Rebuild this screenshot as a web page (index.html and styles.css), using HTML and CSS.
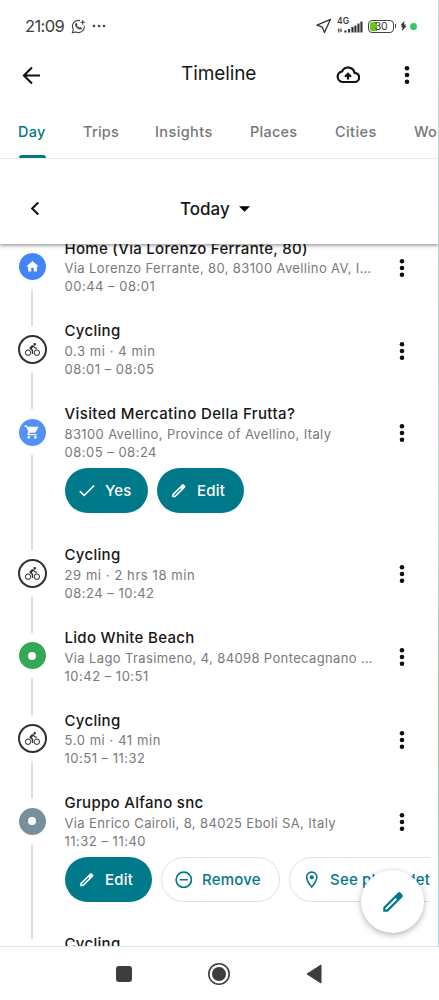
FILE: index.html
```
<!DOCTYPE html>
<html lang="en">
<head>
<meta charset="utf-8">
<title>Timeline</title>
<link rel="stylesheet" href="styles.css">
</head>
<body>
<svg class="defs" aria-hidden="true">
  <symbol id="dots" viewBox="0 0 6 20"><circle cx="3" cy="3.2" r="2.3"/><circle cx="3" cy="10" r="2.3"/><circle cx="3" cy="16.8" r="2.3"/></symbol>
  <symbol id="bike" viewBox="0 0 24 24"><path d="M15.5 5.5c1.1 0 2-.9 2-2s-.9-2-2-2-2 .9-2 2 .9 2 2 2zM5 12c-2.8 0-5 2.200-5 5s2.200 5 5 5 5-2.200 5-5-2.200-5-5-5zm0 8.500c-1.900 0-3.500-1.600-3.500-3.500s1.600-3.500 3.500-3.500 3.500 1.600 3.500 3.500-1.600 3.500-3.500 3.500zm5.800-10l2.400-2.400.8.800c1.300 1.300 3 2.100 5.100 2.100V9c-1.500 0-2.700-.6-3.600-1.500l-1.900-1.900c-.5-.4-1-.6-1.600-.6s-1.100.2-1.400.6L7.800 8.400c-.4.400-.6.900-.6 1.400 0 .6.200 1.100.6 1.400L11 14v5h2v-6.200l-2.200-2.300zM19 12c-2.800 0-5 2.200-5 5s2.200 5 5 5 5-2.200 5-5-2.200-5-5-5zm0 8.500c-1.900 0-3.500-1.600-3.500-3.500s1.600-3.500 3.500-3.500 3.500 1.600 3.500 3.500-1.600 3.500-3.500 3.500z"/></symbol>
  <symbol id="home" viewBox="0 0 24 24"><path d="M10 20v-6h4v6h5v-8h3L12 3 2 12h3v8z"/></symbol>
  <symbol id="cart" viewBox="0 0 24 24"><path d="M7 18c-1.100 0-1.990.9-1.990 2S5.900 22 7 22s2-.9 2-2-.9-2-2-2zM1 2v2h2l3.600 7.590-1.350 2.450C4.520 15.370 5.480 17 7 17h12v-2H7.420l1.100-2h7.450c.75 0 1.410-.41 1.750-1.030L22 4H5.210l-.94-2H1zm16 16c-1.100 0-1.990.9-1.990 2s.89 2 1.990 2 2-.9 2-2-.9-2-2-2z"/></symbol>
  <symbol id="pencil" viewBox="0 0 24 24"><path fill-rule="evenodd" d="M20.400 4.800 19.200 3.600a2.100 2.100 0 0 0-3 0L3 16.800V21h4.200L20.400 7.800a2.100 2.100 0 0 0 0-3zM6.200 19H5v-1.200L14.400 8.400l1.200 1.200z"/></symbol>
  <symbol id="check" viewBox="0 0 24 24"><path d="M2.500 12.500l6 6L22 5" fill="none" stroke="currentColor" stroke-width="2.200"/></symbol>
  <symbol id="minus" viewBox="0 0 24 24"><g fill="none" stroke="currentColor" stroke-width="2.200"><circle cx="12" cy="12" r="10.500"/><path d="M6.500 12h11"/></g></symbol>
  <symbol id="pin" viewBox="0 0 24 24"><path d="M12 1.500c-4 0-7 3-7 7 0 5 7 13.500 7 13.500s7-8.500 7-13.500c0-4-3-7-7-7z" fill="none" stroke="currentColor" stroke-width="2.200"/><circle cx="12" cy="8.500" r="2.800"/></symbol>
</svg>

<div class="screen">
  <header class="header">
    <div class="status">
      <span class="clock">21:09</span>
      <svg class="chat" viewBox="0 0 16 16"><g fill="none" stroke="#444" stroke-width="1.200"><path d="M9.600 1.700A6.300 6.300 0 0 0 2.500 11L1.500 14.700 5.200 13.800A6.300 6.300 0 0 0 14.200 7.300M12.500 1v5M10 3.500h5"/></g><path d="M5 4.500c.7-.6 1.200-.4 1.500.3l.5 1.200-.7 1c.6 1.200 1.400 1.900 2.600 2.400l.9-1 1.700.8c.5.900-.7 2-1.700 2C7 11 4.200 8 4.300 6z" fill="#444"/></svg>
      <svg class="more" viewBox="0 0 14 4" fill="#444"><circle cx="2" cy="2" r="1.300"/><circle cx="7" cy="2" r="1.300"/><circle cx="12" cy="2" r="1.300"/></svg>
      <svg class="nav-arrow" viewBox="0 0 16 16"><path d="M14.500 1.300 1 7.200l5.300 2 2.200 5.400z" fill="none" stroke="#333" stroke-width="1.300" stroke-linejoin="round"/></svg>
      <span class="signal"><span class="net">4G</span>
        <svg class="bars" viewBox="0 0 26 12" fill="#333"><path d="M2 7.500 0 9.300h1.300v2.200H2.400V7.500zM3.400 7.500v4L5.600 9.700H4.500V7.500zM7.300 9.500h2.300v2H7.300zM11 8h2.200v3.500H11zM14.400 6h2.200v5.500h-2.200zM17.400 4.500h2.100v7h-2.100zM20.400 2.500h2.100v9h-2.100zM23.400.5h2.100v11h-2.100z"/></svg>
      </span>
      <span class="battery"><span class="charge">30</span></span>
      <svg class="bolt" viewBox="0 0 8 12"><path d="M5 0 .5 5.500H3L.8 7.300H3L2 12l5.500-6H5l2.300-1.800H4.600z" fill="#333"/></svg>
      <span class="live"></span>
    </div>
    <div class="appbar">
      <svg class="back" viewBox="0 0 20 20"><path d="M19 10H2.500M10.500 1.500 2 10l8.500 8.500" fill="none" stroke="#111" stroke-width="2.200"/></svg>
      <h1 class="heading">Timeline</h1>
      <svg class="cloud" viewBox="0 0 24 18"><path d="M18.500 6.800A6.500 6.500 0 0 0 6.200 5.300 5.400 5.400 0 0 0 6.500 16h12a4.600 4.600 0 0 0 0-9.200z" fill="none" stroke="#111" stroke-width="2.200"/><path d="M12 13.500V8.500M9 10.800 12 7.800l3 3" fill="none" stroke="#111" stroke-width="2.200"/></svg>
      <svg class="dots"><use href="#dots"/></svg>
    </div>
    <nav class="tabs"><a class="tab tab-on w-day">Day</a><a class="tab w-trips">Trips</a><a class="tab w-insights">Insights</a><a class="tab w-places">Places</a><a class="tab w-cities">Cities</a><a class="tab">World</a></nav>
    <div class="datebar">
      <svg class="prev" viewBox="0 0 10 16"><path d="M8.500 1.500 2 8l6.500 6.500" fill="none" stroke="#111" stroke-width="2.200"/></svg>
      <span class="today">Today</span>
      <svg class="caret" viewBox="0 0 12 6"><path d="M0 0h12L6 6z"/></svg>
    </div>
  </header>

  <main class="list">
    <section class="item">
      <div class="rail"><span class="node blue"><svg class="glyph"><use href="#home"/></svg></span><i class="line"></i></div>
      <div class="body"><h2 class="title t-home">Home (Via Lorenzo Ferrante, 80)</h2><p class="sub">Via Lorenzo Ferrante, 80, 83100 Avellino AV, I…</p><p class="time">00:44 – 08:01</p></div>
      <svg class="dots"><use href="#dots"/></svg>
    </section>
    <section class="item">
      <div class="rail"><span class="node ring"><svg class="glyph"><use href="#bike"/></svg></span><i class="line"></i></div>
      <div class="body"><h2 class="title">Cycling</h2><p class="sub stat">0.3 mi · 4 min</p><p class="time">08:01 – 08:05</p></div>
      <svg class="dots"><use href="#dots"/></svg>
    </section>
    <section class="item tall">
      <div class="rail"><span class="node sky"><svg class="glyph"><use href="#cart"/></svg></span><i class="line"></i></div>
      <div class="body"><h2 class="title t-visit">Visited Mercatino Della Frutta?</h2><p class="sub">83100 Avellino, Province of Avellino, Italy</p><p class="time">08:05 – 08:24</p>
        <div class="actions"><button class="btn solid yes"><svg class="ico"><use href="#check"/></svg>Yes</button><button class="btn solid edit"><svg class="ico"><use href="#pencil"/></svg>Edit</button></div></div>
      <svg class="dots"><use href="#dots"/></svg>
    </section>
    <section class="item">
      <div class="rail"><span class="node ring"><svg class="glyph"><use href="#bike"/></svg></span><i class="line"></i></div>
      <div class="body"><h2 class="title">Cycling</h2><p class="sub stat">29 mi · 2 hrs 18 min</p><p class="time">08:24 – 10:42</p></div>
      <svg class="dots"><use href="#dots"/></svg>
    </section>
    <section class="item">
      <div class="rail"><span class="node green"><i class="hole"></i></span><i class="line"></i></div>
      <div class="body"><h2 class="title">Lido White Beach</h2><p class="sub">Via Lago Trasimeno, 4, 84098 Pontecagnano …</p><p class="time">10:42 – 10:51</p></div>
      <svg class="dots"><use href="#dots"/></svg>
    </section>
    <section class="item">
      <div class="rail"><span class="node ring"><svg class="glyph"><use href="#bike"/></svg></span><i class="line"></i></div>
      <div class="body"><h2 class="title">Cycling</h2><p class="sub stat">5.0 mi · 41 min</p><p class="time">10:51 – 11:32</p></div>
      <svg class="dots"><use href="#dots"/></svg>
    </section>
    <section class="item tall">
      <div class="rail"><span class="node slate"><i class="hole"></i></span><i class="line"></i></div>
      <div class="body"><h2 class="title">Gruppo Alfano snc</h2><p class="sub">Via Enrico Cairoli, 8, 84025 Eboli SA, Italy</p><p class="time">11:32 – 11:40</p>
        <div class="actions"><button class="btn solid edit"><svg class="ico"><use href="#pencil"/></svg>Edit</button><button class="btn outline remove"><svg class="ico"><use href="#minus"/></svg>Remove</button><button class="btn outline see"><svg class="ico"><use href="#pin"/></svg>See place details</button></div></div>
      <svg class="dots"><use href="#dots"/></svg>
    </section>
    <section class="item">
      <div class="rail"></div>
      <div class="body"><h2 class="title">Cycling</h2></div>
    </section>
    <button class="fab"><svg class="fab-ico"><use href="#pencil"/></svg></button>
  </main>

  <footer class="sysnav">
    <i class="recent"></i>
    <svg class="homekey" viewBox="0 0 24 24"><circle cx="12" cy="12" r="10.200" fill="none" stroke="#3d3d3d" stroke-width="1.600"/><circle cx="12" cy="12" r="7" fill="#3d3d3d"/></svg>
    <svg class="backkey" viewBox="0 0 16 20"><path d="M15 1v18L1 10z" fill="#3d3d3d" stroke="#3d3d3d" stroke-linejoin="round"/></svg>
  </footer>
  <i class="edge"></i>
</div>
</body>
</html>
```

FILE: styles.css
```
* { box-sizing: border-box; margin: 0; padding: 0; }
body { font-family: Inter, "Open Sans", sans-serif; background: #fff; color: #171717; }
button { font: inherit; border: 0; }
svg { display: block; flex: none; }
.defs { position: absolute; width: 0; height: 0; }
.screen { position: relative; width: 439px; height: 1000px; display: flex; flex-direction: column; overflow: hidden; background: #fff; }

.header { position: relative; z-index: 2; flex: none; height: 244px; background: #fff; box-shadow: 0 1px 4px rgba(0,0,0,.5); display: flex; flex-direction: column; }
.status { height: 52px; display: flex; align-items: center; padding: 0 22px 0 25px; color: #3b3b3b; }
.clock { width: 46px; font-size: 16.500px; letter-spacing: -.6px; white-space: nowrap; }
.chat { width: 15px; height: 15px; }
.more { width: 14px; height: 4px; margin-left: 6px; }
.nav-arrow { width: 16px; height: 16px; margin-left: auto; }
.signal { width: 26px; height: 16px; margin-left: 5px; display: flex; flex-direction: column; justify-content: space-between; position: relative; }
.net { font-size: 8.500px; line-height: 7px; font-weight: 600; }
.bars { position: absolute; left: 0; bottom: 1px; width: 26px; height: 12px; }
.battery { position: relative; width: 26px; height: 13px; margin-left: 5px; border: 1px solid #444; border-radius: 4px; padding: 1px; display: flex; }
.battery::after { content: ""; position: absolute; right: -3px; top: 3px; width: 1px; height: 4px; background: #444; }
.charge { flex: 1; border-radius: 2px; background: linear-gradient(90deg, #68c61c 30%, #fff 30%); font-size: 10.500px; letter-spacing: -.4px; line-height: 9.500px; text-align: center; color: #333; }
.bolt { width: 7px; height: 12px; margin-left: 6px; }
.live { width: 7px; height: 7px; border-radius: 50%; background: #2fca67; margin-left: 3px; }

.appbar { height: 46px; display: flex; align-items: center; padding: 0 29px 0 22px; }
.back { width: 19px; height: 19px; }
.heading { margin-left: 140px; width: 155px; font-size: 19px; font-weight: 400; letter-spacing: -.1px; line-height: 24px; margin-top: -2px; }
.cloud { width: 24px; height: 18px; }
.dots { width: 6px; height: 20px; fill: #111; }
.appbar .dots { margin-left: auto; }

.tabs { height: 61px; display: flex; padding-left: 18px; border-bottom: 1px solid #ececec; overflow: hidden; }
.tab { flex: none; position: relative; font-size: 14.500px; font-weight: 500; line-height: 67px; color: #747779; letter-spacing: .25px; }
.w-day { width: 65px; }
.w-trips { width: 72px; }
.w-insights { width: 95px; letter-spacing: .4px; }
.w-places { width: 85px; }
.w-cities { width: 79px; letter-spacing: .4px; }
.tab-on { color: #04788a; }
.tab-on::after { content: ""; position: absolute; left: 1px; width: 27px; bottom: 0; height: 3px; border-radius: 3px 3px 0 0; background: #04788a; }
.datebar { flex: 1; display: flex; align-items: center; padding: 14px 0 0 30px; }
.prev { width: 10px; height: 15px; }
.today { margin-left: 140px; width: 59px; font-size: 17px; font-weight: 500; }
.caret { width: 11px; height: 6px; }

.list { position: relative; flex: 1; min-height: 0; overflow: hidden; border-bottom: 1px solid #d6ebef; padding: .8px 10px 0 0; margin-top: -6px; }
.item { height: 82.700px; display: flex; }
.item.tall { height: 141px; }
.item > .dots { margin: 19.200px 24px 0 0; }
.rail { flex: none; width: 64.500px; padding-top: 13px; display: flex; flex-direction: column; align-items: center; }
.node { flex: none; width: 27px; height: 27px; margin: 1.500px 0; border-radius: 50%; display: grid; place-items: center; color: #fff; }
.glyph { width: 15px; height: 15px; fill: currentColor; }
.blue { background: #4285f4; }
.sky { background: #5491f5; }
.sky .glyph { width: 16px; height: 16px; }
.green { background: #34a853; }
.slate { background: #78909c; }
.ring { width: 29px; height: 29px; margin: .5px 0; border: 2px solid #303030; color: #303030; }
.hole { width: 8px; height: 8px; border-radius: 50%; background: #fff; }
.line { flex: 1; width: 2px; background: #dcdde0; margin: 7.500px 0 -5px; }
.body { flex: 1; min-width: 0; }
.title { font-size: 15px; font-weight: 500; line-height: 20px; letter-spacing: .3px; white-space: nowrap; color: #171717; }
.t-visit { letter-spacing: .38px; }
.sub, .time { font-size: 13px; line-height: 18px; letter-spacing: .5px; color: #77797b; white-space: nowrap; }
.sub { margin-top: .7px; letter-spacing: .37px; }
.stat { letter-spacing: .58px; }
.actions { display: flex; gap: 9px; margin-top: 7px; margin-right: -30px; }
.btn { flex: none; height: 45px; border-radius: 23px; display: flex; align-items: center; gap: 10px; padding-left: 13px; font-size: 15px; font-weight: 500; letter-spacing: .2px; white-space: nowrap; }
.solid { background: #00798a; color: #fff; }
.outline { background: #fff; border: 1px solid #dedfe0; color: #04788a; }
.ico { width: 17.500px; height: 17.500px; fill: currentColor; }
.yes { width: 83px; }
.edit { width: 87px; }
.remove { width: 119px; }
.see { width: 160px; }
.list::after { content: ""; position: absolute; right: 0; top: 0; bottom: 0; width: 9px; background: #fff; }
.fab { position: absolute; left: 361px; top: 632px; width: 63px; height: 63px; border-radius: 50%; z-index: 1; background: #fff; color: #04788a; display: grid; place-items: center; box-shadow: 0 2px 6px rgba(0,0,0,.3); }
.fab-ico { width: 26px; height: 26px; fill: currentColor; }

.sysnav { flex: none; height: 53px; display: flex; align-items: center; padding-left: 116px; }
.recent { width: 16px; height: 16px; border-radius: 3px; background: #3d3d3d; }
.homekey { width: 24px; height: 24px; margin-left: 75px; }
.backkey { width: 16px; height: 20px; margin-left: 75px; }
.edge { position: absolute; z-index: 3; right: 0; top: 0; width: 1px; height: 947px; background: linear-gradient(#c3dfdf, #b4d1cf 30%, #c7e0d8 55%, #9dbfaf 75%, #b5d5c8 93%, #a6e0ea 94%); }
```
